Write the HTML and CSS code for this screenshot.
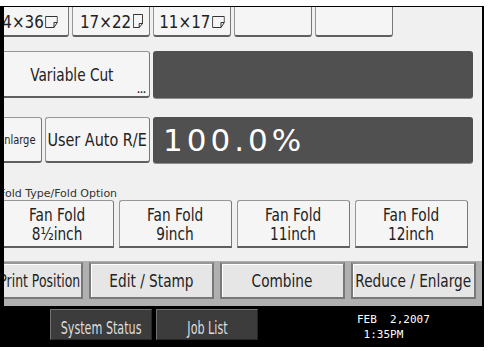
FILE: index.html
```html
<!DOCTYPE html>
<html>
  <head>
    <meta http-equiv="content-type" content="text/html; charset=UTF-8">
    <title>Copier - Reduce / Enlarge</title>
    <meta name="viewport" content="width=device-width">
    <link rel="stylesheet" href="styles.css">
  </head>
  <body>
    <div class="screen">
      <!-- Paper size row, scrolled so only its lower part shows -->
      <div class="row sizeRow">
        <div class="btn sizeBtn"><span class="t">4×36<svg class="paper wide" viewBox="0 0 15 12"><path d="M0.5 0.5H14.5V6.5L10.5 11.5H0.5Z M10.5 11.5V6.5H14.5" /></svg></span></div>
        <div class="btn sizeBtn"><span class="t">17×22<svg class="paper tall" viewBox="0 0 12 14"><path d="M0.5 0.5H11.5V9.5L7.5 13.5H0.5Z M7.5 13.5V9.5H11.5" /></svg></span></div>
        <div class="btn sizeBtn"><span class="t">11×17<svg class="paper wide" viewBox="0 0 15 12"><path d="M0.5 0.5H14.5V6.5L10.5 11.5H0.5Z M10.5 11.5V6.5H14.5" /></svg></span></div>
        <div class="btn sizeBtn"></div>
        <div class="btn sizeBtn"></div>
      </div>

      <div class="row cutRow">
        <div class="btn cutBtn"><span class="t">Variable Cut</span><span class="more">...</span></div>
        <div class="field"></div>
      </div>

      <div class="row ratioRow">
        <div class="btn smallBtn"><span class="t">Enlarge</span></div>
        <div class="btn autoBtn"><span class="t">User Auto R/E</span></div>
        <div class="field ratio">100.0%</div>
      </div>

      <div class="groupLabel">Fold Type/Fold Option</div>
      <div class="row foldRow">
        <div class="btn foldBtn"><span class="t">Fan Fold<br>8½inch</span></div>
        <div class="btn foldBtn"><span class="t">Fan Fold<br>9inch</span></div>
        <div class="btn foldBtn"><span class="t">Fan Fold<br>11inch</span></div>
        <div class="btn foldBtn"><span class="t">Fan Fold<br>12inch</span></div>
      </div>

      <div class="tabStrip">
        <div class="tab firstTab"><span class="t">Print Position</span></div>
        <div class="tab"><span class="t">Edit / Stamp</span></div>
        <div class="tab"><span class="t">Combine</span></div>
        <div class="tab"><span class="t">Reduce / Enlarge</span></div>
      </div>

      <div class="statusBar">
        <div class="barBtn"><span class="t narrow">System Status</span></div>
        <div class="barBtn"><span class="t narrow">Job List</span></div>
        <div class="clock">FEB&nbsp;&nbsp;2,2007<br>&nbsp;1:35PM</div>
      </div>
    </div>
  </body>
</html>
```

FILE: styles.css
```css
:root {
  --screen: rgb(240, 240, 240);
  --face: rgb(245, 245, 245);
  --edge: rgb(150, 150, 150);
  --shadow: rgb(95, 95, 95);
  --field: rgb(80, 80, 80);
  --tabFace: rgb(230, 230, 230);
  --strip: rgb(176, 176, 176);
  --barBtn: rgb(60, 60, 60);
}
body {
  margin: 0;
  background-color: #fff;
  font-family: "DejaVu Sans", sans-serif;
  color: #222;
}
/* the panel font is tall and narrow - squeeze DejaVu to match */
.t {
  display: inline-block;
  flex-shrink: 0;
  transform: scaleX(0.76);
  white-space: nowrap;
}
.t.narrow { transform: scaleX(0.62); }
.screen {
  margin-top: 6px;
  width: 484px;
  height: 341px;
  box-sizing: border-box;
  border-top: 1px solid #000;
  border-left: 4px solid #000;
  border-right: 2px solid #000;
  background-color: var(--screen);
  overflow: hidden;
  display: flex;
  flex-direction: column;
}
.row {
  display: flex;
  flex-shrink: 0;
}
.btn {
  box-sizing: border-box;
  flex-shrink: 0;
  display: flex;
  align-items: center;
  justify-content: center;
  text-align: center;
  background-color: var(--face);
  border: 1px solid var(--edge);
  border-bottom: 2px solid var(--shadow);
  border-right-color: rgb(120, 120, 120);
  border-radius: 3px;
  white-space: nowrap;
  position: relative;
}

/* paper sizes */
.sizeRow {
  height: 30px;
  gap: 3px;
  margin-left: -13px;
}
.sizeBtn {
  width: 78px;
  height: 30px;
  border-top: none;
  border-radius: 0 0 3px 3px;
  font-size: 18px;
}
.sizeBtn .t { transform: scaleX(0.84); }
.paper {
  fill: none;
  stroke: #222;
  stroke-width: 1;
  margin-left: 2px;
}
.paper.wide { width: 15px; height: 12px; }
.paper.tall { width: 12px; height: 14px; }

/* variable cut */
.cutRow {
  margin-top: 14px;
  height: 47px;
  gap: 3px;
  margin-left: -11px;
}
.cutBtn {
  width: 157px;
  font-size: 18px;
}
.more {
  position: absolute;
  right: 3px;
  bottom: 1px;
  font-size: 8px;
  line-height: 8px;
  font-weight: bold;
}
.field {
  width: 320px;
  background-color: var(--field);
  border-radius: 3px;
  box-shadow: 0 1px 0 rgb(140, 140, 140);
}

/* ratio */
.ratioRow {
  margin-top: 19px;
  height: 46px;
  gap: 3px;
  margin-left: -12px;
}
.smallBtn {
  width: 50px;
  font-size: 13px;
}
.autoBtn {
  width: 105px;
  font-size: 18px;
}
.autoBtn .t { transform: scaleX(0.8); }
.ratio {
  color: #fff;
  font-size: 31px;
  letter-spacing: 4px;
  line-height: 46px;
  padding-left: 10px;
  box-sizing: border-box;
}

/* fold type */
.groupLabel {
  margin-top: 24px;
  height: 13px;
  font-size: 11px;
  line-height: 13px;
  margin-left: -5px;
  color: #333;
}
.foldRow {
  height: 48px;
  gap: 5px;
  margin-left: -3px;
}
.foldBtn {
  width: 113px;
  font-size: 18px;
  line-height: 19px;
  border-radius: 3px 3px 0 0;
  padding-top: 1px;
}

/* tabs */
.tabStrip {
  flex-shrink: 0;
  margin-top: 10px;
  height: 48px;
  box-sizing: border-box;
  padding: 4px 0 7px;
  background: linear-gradient(var(--screen) 0, var(--screen) 3px, var(--strip) 3px);
  display: flex;
  gap: 6px;
  margin-left: -11px;
}
.tab {
  box-sizing: border-box;
  flex-shrink: 0;
  width: 125px;
  display: flex;
  align-items: center;
  justify-content: center;
  background-color: var(--tabFace);
  border: 2px solid rgb(120, 120, 120);
  border-top-color: rgb(150, 150, 150);
  box-shadow: inset 1px 1px 0 #fff;
  font-size: 18px;
  white-space: nowrap;
}
.firstTab {
  width: 90px;
  justify-content: flex-end;
  padding-right: 1px;
}
.firstTab .t {
  transform: scaleX(0.69);
  transform-origin: right center;
}

/* status bar */
.statusBar {
  flex-shrink: 0;
  height: 41px;
  background-color: #000;
  display: flex;
  align-items: flex-start;
  padding: 3px 0 0 46px;
  box-sizing: border-box;
  gap: 4px;
}
.barBtn {
  box-sizing: border-box;
  width: 102px;
  height: 31px;
  display: flex;
  align-items: center;
  justify-content: center;
  background-color: var(--barBtn);
  border: 1px solid rgb(115, 115, 115);
  border-bottom-color: rgb(40, 40, 40);
  border-right-color: rgb(40, 40, 40);
  color: #ddd;
  font-size: 18px;
  padding-top: 5px;
}
.clock {
  margin-left: 95px;
  margin-top: 3px;
  color: #fff;
  font-family: "DejaVu Sans Mono", monospace;
  font-size: 11px;
  line-height: 15px;
}
```
